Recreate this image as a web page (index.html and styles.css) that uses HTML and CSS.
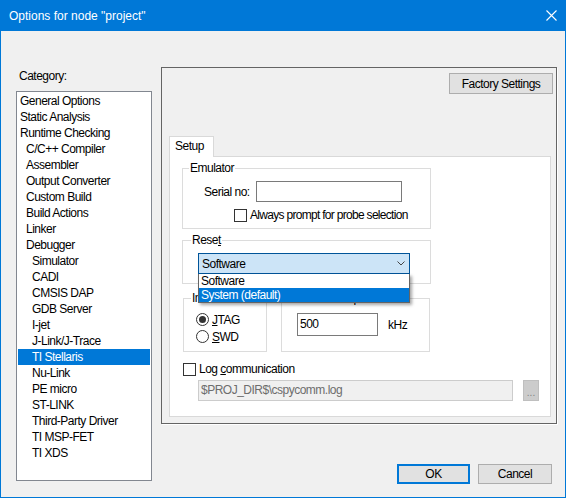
FILE: index.html
```html
<!DOCTYPE html>
<html>
<head>
  <title>Options for node "project"</title>
  <link rel="stylesheet" href="styles.css">
</head>
<body>
  <div class="dialog">
    <div class="titlebar">
      <span class="title">Options for node "project"</span>
      <svg class="close" width="11" height="11" viewBox="0 0 11 11">
        <path d="M0.5 0.5 L10.5 10.5 M10.5 0.5 L0.5 10.5" stroke="#fff" stroke-width="1.1" fill="none"/>
      </svg>
    </div>

    <div class="main">
      <div class="category">
        <div class="category-label">Category:</div>
        <ul class="category-list">
          <li>General Options</li>
          <li>Static Analysis</li>
          <li>Runtime Checking</li>
          <li class="lvl1">C/C++ Compiler</li>
          <li class="lvl1">Assembler</li>
          <li class="lvl1">Output Converter</li>
          <li class="lvl1">Custom Build</li>
          <li class="lvl1">Build Actions</li>
          <li class="lvl1">Linker</li>
          <li class="lvl1">Debugger</li>
          <li class="lvl2">Simulator</li>
          <li class="lvl2">CADI</li>
          <li class="lvl2">CMSIS DAP</li>
          <li class="lvl2">GDB Server</li>
          <li class="lvl2">I-jet</li>
          <li class="lvl2">J-Link/J-Trace</li>
          <li class="lvl2 selected">TI Stellaris</li>
          <li class="lvl2">Nu-Link</li>
          <li class="lvl2">PE micro</li>
          <li class="lvl2">ST-LINK</li>
          <li class="lvl2">Third-Party Driver</li>
          <li class="lvl2">TI MSP-FET</li>
          <li class="lvl2">TI XDS</li>
        </ul>
      </div>

      <div class="right">
        <div class="options-frame">
          <div class="frame-top">
            <button class="btn factory">Factory Settings</button>
          </div>

          <div class="tabs">
            <div class="tab">Setup</div>
          </div>

          <div class="tab-page">
            <fieldset class="group emulator">
              <legend>Emulator</legend>
              <div class="serial-row">
                <label>Serial no:</label>
                <div class="edit serial"></div>
              </div>
              <div class="check-row probe">
                <span class="checkbox"></span><span>Always prompt for probe selection</span>
              </div>
            </fieldset>

            <fieldset class="group reset">
              <legend>Rese<u>t</u></legend>
              <div class="combo">
                <span>Software</span>
                <svg width="8" height="5" viewBox="0 0 8 5">
                  <path d="M0.5 0.5 L4 4 L7.5 0.5" stroke="#444" stroke-width="1" fill="none"/>
                </svg>
                <ul class="combo-list">
                  <li>Software</li>
                  <li class="selected">System (default)</li>
                </ul>
              </div>
            </fieldset>

            <div class="group-row">
              <fieldset class="group interface">
                <legend>Interface</legend>
                <div class="radio-row first"><span class="radio on"></span><span><u>J</u>TAG</span></div>
                <div class="radio-row"><span class="radio"></span><span><u>S</u>WD</span></div>
              </fieldset>
              <fieldset class="group speed">
                <legend>JTAG/SWD speed</legend>
                <div class="speed-row">
                  <div class="edit speed-box">500</div>
                  <span class="unit">kHz</span>
                </div>
              </fieldset>
            </div>

            <div class="check-row log">
              <span class="checkbox"></span><span>Log <u>c</u>ommunication</span>
            </div>
            <div class="path-row">
              <div class="edit path">$PROJ_DIR$\cspycomm.log</div>
              <div class="browse">...</div>
            </div>
          </div>
        </div>

        <div class="dialog-buttons">
          <button class="btn ok">OK</button>
          <button class="btn cancel">Cancel</button>
        </div>
      </div>
    </div>
  </div>
</body>
</html>
```

FILE: styles.css
```css
* {
  box-sizing: border-box;
}

body {
  margin: 0;
  font-family: "Liberation Sans", Arial, sans-serif;
  font-size: 12px;
  letter-spacing: -0.5px;
  color: #000;
  background-color: #f0f0f0;
}

.dialog {
  width: 566px;
  height: 498px;
  border: 1px solid #0078d7;
  border-top: 0;
  display: flex;
  flex-direction: column;
  background-color: #f0f0f0;
}

.titlebar {
  height: 31px;
  flex: none;
  background-color: #0078d7;
  color: #fff;
  display: flex;
  align-items: center;
  justify-content: space-between;
  padding: 0 8px;
  letter-spacing: 0;
}

.main {
  flex: 1;
  display: flex;
  padding-left: 15px;
}

/* category tree */
.category {
  width: 136px;
  padding-top: 38px;
}

.category-label {
  line-height: 15px;
  padding-left: 3px;
  margin-bottom: 7px;
}

.category-list {
  list-style: none;
  margin: 0;
  padding: 1px;
  height: 390px;
  border: 1px solid #828790;
  background-color: #fff;
}

.category-list li {
  line-height: 16px;
  padding-left: 2px;
  white-space: nowrap;
}

.category-list .lvl1 {
  padding-left: 8px;
}

.category-list .lvl2 {
  padding-left: 14px;
}

.selected {
  background-color: #0078d7;
  color: #fff;
}

/* right side */
.right {
  width: 396px;
  margin-left: 9px;
  padding-top: 36px;
}

.options-frame {
  width: 396px;
  height: 357px;
  border: 1px solid #646464;
  box-shadow: 1px 1px 0 #fff;
  padding: 5px 3px 0 7px;
}

.frame-top {
  display: flex;
  justify-content: flex-end;
}

.btn {
  font: inherit;
  letter-spacing: inherit;
  color: #000;
  background-color: #e1e1e1;
  border: 1px solid #adadad;
  padding: 0;
  height: 21px;
  text-align: center;
}

.factory {
  width: 104px;
}

.tabs {
  display: flex;
  margin-top: 42px;
}

.tab {
  width: 45px;
  height: 21px;
  border: 1px solid #d9d9d9;
  border-bottom: 0;
  background-color: #fff;
  line-height: 19px;
  padding-left: 5px;
  margin-bottom: -1px;
  position: relative;
  z-index: 1;
}

.tab-page {
  width: 382px;
  height: 261px;
  border: 1px solid #d9d9d9;
  background-color: #fff;
  padding: 4px 0 0 12px;
}

/* group boxes */
.group {
  margin: 0;
  padding: 0;
  min-width: 0;
  border: 1px solid #dcdcdc;
}

.group legend {
  padding: 0 1px;
  line-height: 15px;
}

.emulator {
  width: 249px;
  padding-bottom: 5px;
}

.emulator legend {
  margin-left: 6px;
}

.serial-row {
  display: flex;
  align-items: center;
  margin-top: 5px;
}

.serial-row label {
  width: 52px;
  margin-left: 21px;
}

.edit {
  height: 21px;
  border: 1px solid #7a7a7a;
  background-color: #fff;
}

.serial {
  width: 146px;
}

.check-row {
  display: flex;
  align-items: center;
  height: 15px;
  line-height: 15px;
  white-space: nowrap;
}

.checkbox {
  width: 13px;
  height: 13px;
  border: 1px solid #333;
  background-color: #fff;
  margin-right: 3px;
}

.probe {
  margin-top: 6px;
  margin-left: 51px;
  letter-spacing: -0.7px;
}

.reset {
  width: 249px;
  margin-top: 4px;
  padding-bottom: 9px;
}

.reset legend {
  margin-left: 8px;
}

.combo {
  position: relative;
  width: 212px;
  height: 21px;
  margin-top: 5px;
  margin-left: 15px;
  padding: 0 4px 0 3px;
  border: 1px solid #005499;
  background-color: #cce4f7;
  display: flex;
  align-items: center;
  justify-content: space-between;
}

.combo-list {
  position: absolute;
  top: calc(100% + 1px);
  left: -1px;
  right: -1px;
  margin: 0;
  padding: 0;
  list-style: none;
  background-color: #fff;
  border: 1px solid #646464;
  border-top: 0;
  box-shadow: 2px 2px 3px rgba(0, 0, 0, 0.35);
  z-index: 2;
}

.combo-list li {
  line-height: 14px;
  padding-left: 2px;
}

.group-row {
  display: flex;
  gap: 14px;
  margin-top: 7px;
}

.interface {
  width: 84px;
  height: 61px;
  margin-left: 1px;
}

.interface legend {
  margin-left: 7px;
}

.radio-row {
  display: flex;
  align-items: center;
  height: 15px;
  margin-top: 2px;
  margin-left: 12px;
}

.radio-row.first {
  margin-top: 6px;
}

.radio {
  width: 13px;
  height: 13px;
  border: 1px solid #333;
  border-radius: 50%;
  background-color: #fff;
  margin-right: 3px;
  display: flex;
  align-items: center;
  justify-content: center;
}

.radio.on::after {
  content: "";
  width: 7px;
  height: 7px;
  border-radius: 50%;
  background-color: #333;
}

.speed {
  width: 149px;
  height: 61px;
}

.speed legend {
  margin-left: 5px;
}

.speed-row {
  display: flex;
  align-items: center;
  margin-top: 7px;
  margin-left: 15px;
}

.speed-box {
  width: 81px;
  height: 23px;
  line-height: 21px;
  padding-left: 2px;
}

.unit {
  margin-left: 10px;
}

.log {
  margin-top: 10px;
  margin-left: 1px;
}

.path-row {
  display: flex;
  margin-top: 3px;
  margin-left: 16px;
}

.path {
  width: 315px;
  line-height: 19px;
  padding-left: 2px;
  border-color: #cccccc;
  background-color: #f0f0f0;
  color: #6d6d6d;
}

.browse {
  width: 16px;
  height: 21px;
  margin-left: 10px;
  border: 1px solid #bfbfbf;
  background-color: #cccccc;
  color: #838383;
  font-size: 10px;
  line-height: 24px;
  text-align: center;
  letter-spacing: 0;
}

.dialog-buttons {
  display: flex;
  justify-content: flex-end;
  gap: 8px;
  margin-top: 40px;
  padding-right: 5px;
}

.dialog-buttons .btn {
  height: 20px;
}

.ok {
  width: 73px;
  border: 2px solid #0078d7;
}

.cancel {
  width: 74px;
}
```
